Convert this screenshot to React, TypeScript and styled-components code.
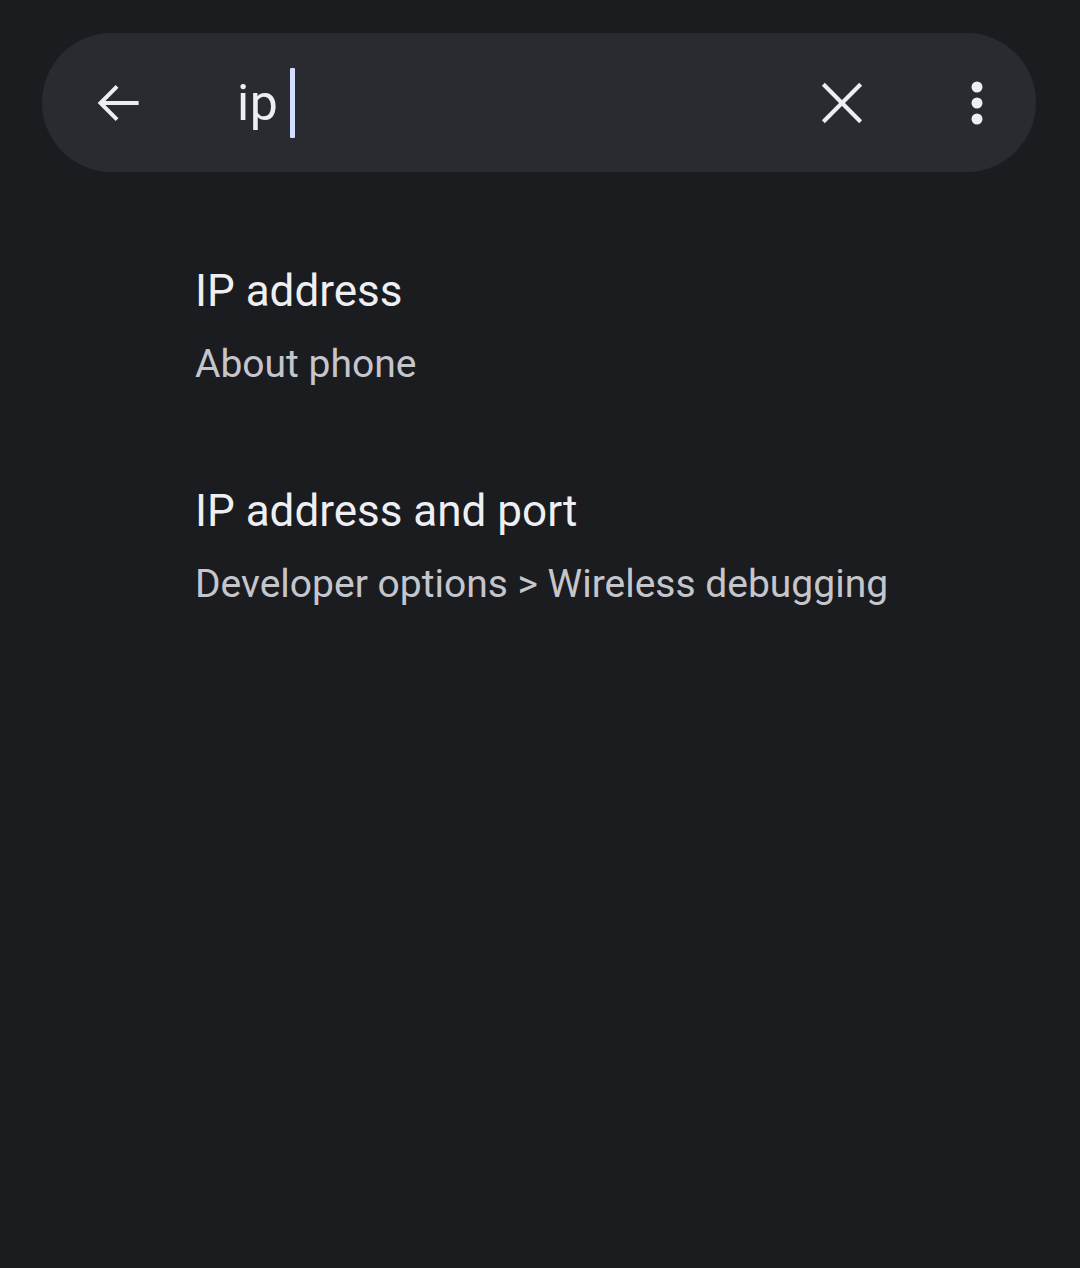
import React from "react";
import styled, { createGlobalStyle } from "styled-components";

const Global = createGlobalStyle`
  html, body { margin: 0; padding: 0; background: #1b1c20; }
  body { font-family: Roboto, "Noto Sans", sans-serif; }
`;

const Page = styled.div`
  width: 1080px;
  height: 1268px;
  background: #1b1c20;
  padding: 33px 44px 0 42px;
  box-sizing: border-box;
`;

const SearchBar = styled.div`
  height: 139px;
  border-radius: 70px;
  background: #2a2b30;
  display: flex;
  align-items: center;
  padding: 0 0 0 48px;
`;

const IconButton = styled.div<{ $w: number; $mr?: number }>`
  width: ${(p) => p.$w}px;
  margin-right: ${(p) => p.$mr ?? 0}px;
  display: flex;
  align-items: center;
  justify-content: center;
  color: #eceef4;
  flex-shrink: 0;
`;

const Query = styled.div`
  flex: 1;
  display: flex;
  align-items: center;
  padding-left: 91px;
  font-size: 50px;
  letter-spacing: 0.5px;
  color: #eceef2;
`;

const Caret = styled.span`
  display: inline-block;
  width: 5px;
  height: 70px;
  background: #d3ddfd;
  margin-left: 12px;
  border-radius: 1px;
`;

const Results = styled.div`
  padding: 131px 0 0 153px;
  display: flex;
  flex-direction: column;
`;

const Result = styled.div`
  height: 220px;
  display: flex;
  flex-direction: column;
`;

const Title = styled.div`
  font-size: 44px;
  line-height: 48px;
  color: #eeeff2;
  margin-top: -36px;
`;

const Subtitle = styled.div`
  font-size: 39px;
  line-height: 48px;
  color: #c5c6cc;
  margin-top: 25px;
`;

export default function App() {
  return (
    <>
      <Global />
      <Page>
        <SearchBar>
          <IconButton $w={56}>
            <svg width="56" height="56" viewBox="0 0 24 24" fill="none" stroke="currentColor" strokeWidth="1.7" strokeLinecap="square">
              <path d="M20 12H5M11 5.5 4.5 12l6.5 6.5" />
            </svg>
          </IconButton>
          <Query>
            ip<Caret />
          </Query>
          <IconButton $w={64} $mr={44}>
            <svg width="64" height="64" viewBox="0 0 24 24" fill="none" stroke="currentColor" strokeWidth="1.55">
              <path d="M5 5 19 19M19 5 5 19" />
            </svg>
          </IconButton>
          <IconButton $w={118}>
            <svg width="16" height="44" viewBox="0 0 16 44" fill="currentColor">
              <circle cx="8" cy="6" r="5.5" />
              <circle cx="8" cy="22" r="5.5" />
              <circle cx="8" cy="38" r="5.5" />
            </svg>
          </IconButton>
        </SearchBar>
        <Results>
          <Result>
            <Title>IP address</Title>
            <Subtitle>About phone</Subtitle>
          </Result>
          <Result>
            <Title>IP address and port</Title>
            <Subtitle>Developer options &gt; Wireless debugging</Subtitle>
          </Result>
        </Results>
      </Page>
    </>
  );
}
